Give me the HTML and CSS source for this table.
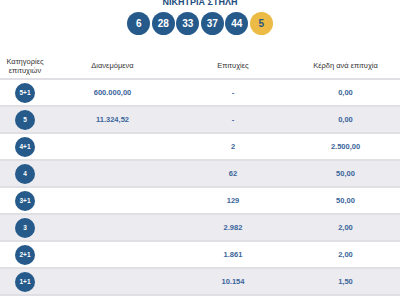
FILE: index.html
```html
<!DOCTYPE html>
<html>
<head>
<meta charset="utf-8">
<link rel="stylesheet" href="styles.css">
</head>
<body>
<div class="draw">
  <div class="title">ΝΙΚΗΤΡΙΑ ΣΤΗΛΗ</div>
  <div class="balls">
    <span class="ball">6</span>
    <span class="ball">28</span>
    <span class="ball">33</span>
    <span class="ball">37</span>
    <span class="ball">44</span>
    <span class="ball joker">5</span>
  </div>
</div>
<div class="table">
  <div class="row head">
    <div class="cell">Κατηγορίες<br>επιτυχιών</div>
    <div class="cell">Διανεμόμενα</div>
    <div class="cell">Επιτυχίες</div>
    <div class="cell">Κέρδη ανά επιτυχία</div>
  </div>
  <div class="row">
    <div class="cell"><span class="cat">5+1</span></div>
    <div class="cell val">600.000,00</div>
    <div class="cell val">-</div>
    <div class="cell val">0,00</div>
  </div>
  <div class="row alt">
    <div class="cell"><span class="cat">5</span></div>
    <div class="cell val">11.324,52</div>
    <div class="cell val">-</div>
    <div class="cell val">0,00</div>
  </div>
  <div class="row">
    <div class="cell"><span class="cat">4+1</span></div>
    <div class="cell val"></div>
    <div class="cell val">2</div>
    <div class="cell val">2.500,00</div>
  </div>
  <div class="row alt">
    <div class="cell"><span class="cat">4</span></div>
    <div class="cell val"></div>
    <div class="cell val">62</div>
    <div class="cell val">50,00</div>
  </div>
  <div class="row">
    <div class="cell"><span class="cat">3+1</span></div>
    <div class="cell val"></div>
    <div class="cell val">129</div>
    <div class="cell val">50,00</div>
  </div>
  <div class="row alt">
    <div class="cell"><span class="cat">3</span></div>
    <div class="cell val"></div>
    <div class="cell val">2.982</div>
    <div class="cell val">2,00</div>
  </div>
  <div class="row">
    <div class="cell"><span class="cat">2+1</span></div>
    <div class="cell val"></div>
    <div class="cell val">1.861</div>
    <div class="cell val">2,00</div>
  </div>
  <div class="row alt">
    <div class="cell"><span class="cat">1+1</span></div>
    <div class="cell val"></div>
    <div class="cell val">10.154</div>
    <div class="cell val">1,50</div>
  </div>
</div>
</body>
</html>
```
FILE: styles.css
```css
html, body {
  margin: 0;
  padding: 0;
  background: #ffffff;
  font-family: "Liberation Sans", Arial, sans-serif;
}
.draw {
  display: flex;
  flex-direction: column;
  align-items: center;
}
.title {
  margin-top: -3px;
  font-size: 9px;
  line-height: 10px;
  font-weight: bold;
  color: #1f4e7e;
}
.balls {
  display: flex;
  gap: 1.5px;
  margin-top: 5px;
}
.ball {
  width: 23px;
  height: 23px;
  border-radius: 50%;
  background: #255a8b;
  color: #ffffff;
  font-weight: bold;
  font-size: 10px;
  display: flex;
  align-items: center;
  justify-content: center;
}
.ball.joker {
  background: #ecbb45;
  color: #2a5680;
}
.table {
  margin-top: 2px;
}
.row {
  display: grid;
  grid-template-columns: 50px 125px 116px 1fr;
  height: 25px;
  border-bottom: 2px solid #dfdfe4;
  background: #ffffff;
}
.row.alt {
  background: #ebebf0;
}
.row.head {
  height: 24px;
  padding-top: 17px;
  font-size: 7.5px;
  line-height: 9.5px;
  color: #333333;
}
.cell {
  display: flex;
  align-items: center;
  justify-content: center;
  text-align: center;
}
.val {
  font-size: 7.5px;
  font-weight: bold;
  color: #3a659a;
}
.cat {
  width: 20px;
  height: 20px;
  border-radius: 50%;
  background: #255a8b;
  color: #ffffff;
  font-size: 6.5px;
  font-weight: bold;
  display: flex;
  align-items: center;
  justify-content: center;
}
```
